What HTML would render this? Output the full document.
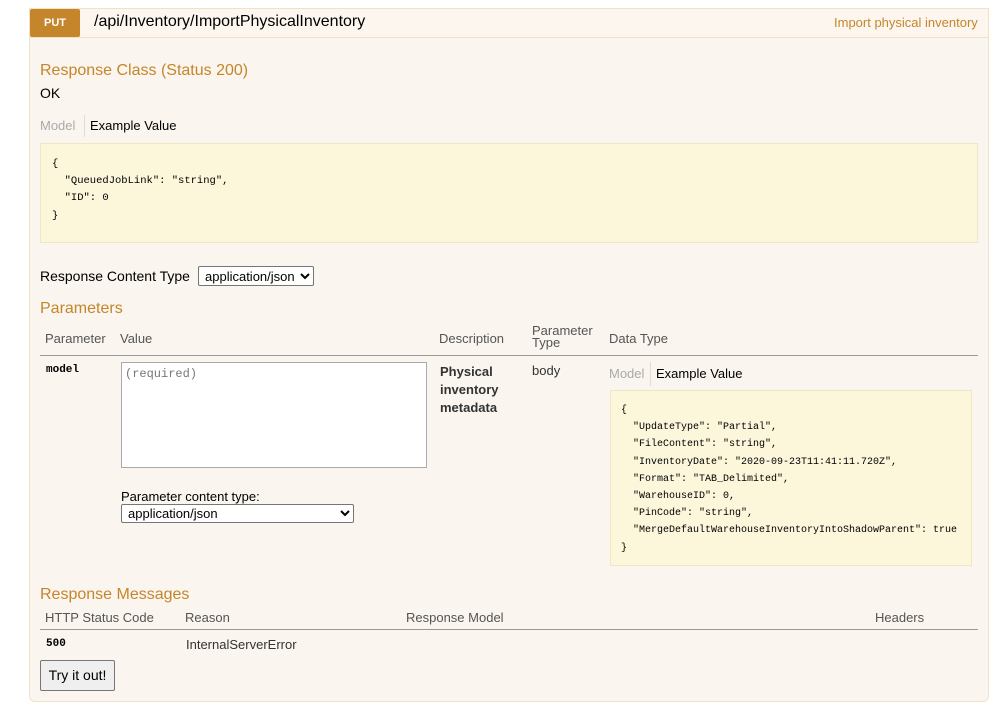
<!DOCTYPE html>
<html><head><meta charset="utf-8"><style>
*{margin:0;padding:0;box-sizing:border-box}
body{width:1004px;height:716px;background:#fff;font-family:"Liberation Sans",sans-serif;position:relative;overflow:hidden;color:#000}
.a{position:absolute;white-space:nowrap}
.box{position:absolute;left:29px;top:8px;width:960px;height:694px;background:#faf5ee;border:1px solid #f1e1c9;border-radius:0 0 6px 6px}
.hdr{position:absolute;left:29px;top:8px;width:960px;height:30px;background:#fcf6ef;border:1px solid #f1e1c9}
.h{color:#c5862b;font-size:16px}
.mono{font-family:"Liberation Mono",monospace}
.code{position:absolute;background:#fcf6db;border:1px solid #efe6c3;font-family:"Liberation Mono",monospace;font-size:10.5px;line-height:17.2px;white-space:pre;color:#000}
.th{color:#555;font-size:13px}
.line{position:absolute;height:1px;background:#999}
select{position:absolute;font-family:"Liberation Sans",sans-serif;font-size:13px;background:#fff;border:1px solid #767676;border-radius:2px;color:#000;padding-left:2px}
</style></head><body>
<div class="box"></div>
<div class="hdr"></div>
<div class="a" style="left:30px;top:9px;width:50px;height:28px;background:#c5862b;border-radius:2px;color:#fff;font-weight:bold;font-size:11px;line-height:28px;text-align:center">PUT</div>
<div class="a" style="left:94px;top:13px;font-size:16px;color:#000">/api/Inventory/ImportPhysicalInventory</div>
<div class="a" style="left:834px;top:15px;font-size:13px;color:#c5862b">Import physical inventory</div>

<div class="a h" style="left:40px;top:62px">Response Class (Status 200)</div>
<div class="a" style="left:40px;top:85px;font-size:14px">OK</div>
<div class="a" style="left:40px;top:118px;font-size:13px;color:#aaa">Model</div>
<div class="a" style="left:84px;top:115px;width:1px;height:22px;background:#ddd"></div>
<div class="a" style="left:90px;top:118px;font-size:13px">Example Value</div>
<div class="code" style="left:40px;top:143px;width:938px;height:100px;padding:12px 0 0 11px">{
  "QueuedJobLink": "string",
  "ID": 0
}</div>

<div class="a" style="left:40px;top:268px;font-size:14px">Response Content Type</div>
<select style="left:198px;top:266px;width:116px;height:20px"><option>application/json</option></select>

<div class="a h" style="left:40px;top:300px">Parameters</div>
<div class="a th" style="left:45px;top:331px">Parameter</div>
<div class="a th" style="left:120px;top:331px">Value</div>
<div class="a th" style="left:439px;top:331px">Description</div>
<div class="a th" style="left:532px;top:325px;line-height:12px;white-space:normal;width:70px">Parameter Type</div>
<div class="a th" style="left:609px;top:331px">Data Type</div>
<div class="line" style="left:40px;top:355px;width:938px"></div>

<div class="a mono" style="left:46px;top:364px;font-size:11px;font-weight:bold">model</div>
<div class="a" style="left:121px;top:362px;width:306px;height:106px;background:#fff;border:1px solid #aaa"></div>
<div class="a mono" style="left:125px;top:367px;font-size:12px;color:#777">(required)</div>
<div class="a" style="left:121px;top:489px;font-size:13px">Parameter content type:</div>
<select style="left:121px;top:504px;width:233px;height:19px"><option>application/json</option></select>
<div class="a" style="left:440px;top:363px;font-size:13px;font-weight:bold;line-height:18px;color:#333">Physical<br>inventory<br>metadata</div>
<div class="a" style="left:532px;top:363px;font-size:13px;color:#333">body</div>
<div class="a" style="left:609px;top:366px;font-size:13px;color:#aaa">Model</div>
<div class="a" style="left:650px;top:362px;width:1px;height:24px;background:#ddd"></div>
<div class="a" style="left:656px;top:366px;font-size:13px">Example Value</div>
<div class="code" style="left:610px;top:390px;width:362px;height:176px;padding:11px 0 0 10px;font-size:10px">{
  "UpdateType": "Partial",
  "FileContent": "string",
  "InventoryDate": "2020-09-23T11:41:11.720Z",
  "Format": "TAB_Delimited",
  "WarehouseID": 0,
  "PinCode": "string",
  "MergeDefaultWarehouseInventoryIntoShadowParent": true
}</div>

<div class="a h" style="left:40px;top:586px">Response Messages</div>
<div class="a th" style="left:45px;top:610px">HTTP Status Code</div>
<div class="a th" style="left:185px;top:610px">Reason</div>
<div class="a th" style="left:406px;top:610px">Response Model</div>
<div class="a th" style="left:875px;top:610px">Headers</div>
<div class="line" style="left:40px;top:629px;width:938px"></div>
<div class="a mono" style="left:46px;top:638px;font-size:11px;font-weight:bold">500</div>
<div class="a" style="left:186px;top:637px;font-size:13px;color:#333">InternalServerError</div>
<div class="a" style="left:40px;top:660px;width:75px;height:31px;background:#efefef;border:1px solid #767676;border-radius:2px;font-size:14px;line-height:29px;text-align:center">Try it out!</div>
</body></html>
